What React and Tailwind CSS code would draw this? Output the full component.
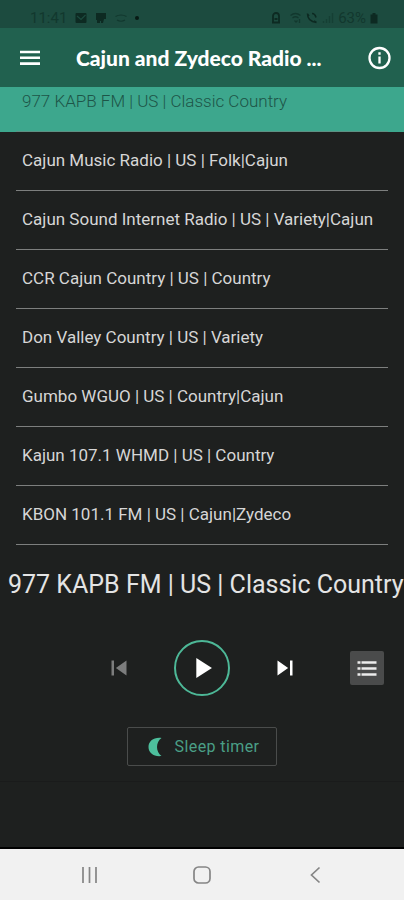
import { useState } from 'react';
import clsx from 'clsx';
import { MdSkipPrevious, MdSkipNext, MdPlayArrow, MdPause } from 'react-icons/md';

const STATIONS = [
  '977 KAPB FM | US | Classic Country',
  'Cajun Music Radio | US | Folk|Cajun',
  'Cajun Sound Internet Radio | US | Variety|Cajun',
  'CCR Cajun Country | US | Country',
  'Don Valley Country | US | Variety',
  'Gumbo WGUO | US | Country|Cajun',
  'Kajun 107.1 WHMD | US | Country',
  'KBON 101.1 FM | US | Cajun|Zydeco',
];

const StatusBar = () => (
  <div className="flex h-7 items-end justify-between bg-[#1c4b3f] pl-[30px] pr-[26px] pb-0.5 text-[#0d2a22]">
    <div className="flex items-center gap-2">
      <span className="text-[15px] leading-4 text-[#12382e]">11:41</span>
      <svg className="h-3 w-3" viewBox="0 0 12 12" fill="none">
        <rect x="0.5" y="1" width="11" height="10" rx="1" fill="currentColor" />
        <path d="M2 4l4 3.5L10.5 3" stroke="#1c4b3f" strokeWidth="1.2" />
      </svg>
      <svg className="h-3 w-3" viewBox="0 0 12 12">
        <path d="M1 1h10v6H9l-1 4H6V9H5v2H2V8H1z" fill="currentColor" />
      </svg>
      <svg className="h-3 w-3" viewBox="0 0 12 12" fill="none" stroke="#12382e" strokeWidth="1.2">
        <path d="M0.5 4.500q5.500-3 11 0M2 8q4 2.500 8 0" />
      </svg>
      <span className="h-1 w-1 rounded-full bg-[#081a15]" />
    </div>
    <div className="flex items-center gap-1">
      <svg className="mr-1 h-3 w-3" viewBox="0 0 12 12" fill="none" stroke="currentColor" strokeWidth="1.8">
        <path d="M3 10.500V4a3 3 0 0 1 6 0v6.500M2 10.500h8M4.500 7h3" />
      </svg>
      <svg className="h-3 w-3" viewBox="0 0 12 12" fill="none" stroke="#12382e" strokeWidth="1.3">
        <path d="M0.500 3.500q5-4 10 0M2.500 6q3-2.500 6 0M4.500 8.500l1.500 1.500 1.500-1.500M9.500 7v4" />
      </svg>
      <svg className="h-3 w-3" viewBox="0 0 12 12" fill="none" stroke="currentColor" strokeWidth="1.6">
        <path d="M1.500 1.500q0 8 9 9M1.500 2l1.500 2M8 9l2.500 1.500M6 1.500q3 0 4 4" />
      </svg>
      <svg className="h-3 w-3" viewBox="0 0 12 12" fill="none" stroke="#153f34" strokeWidth="1.4">
        <path d="M1.500 11V9M4.500 11V7M7.500 11V4M10.500 11V1" />
      </svg>
      <span className="text-[15px] leading-4 text-[#12382e]">63%</span>
      <svg className="h-3 w-2" viewBox="0 0 8 12">
        <path d="M2.500 1h3v1.500H7.500V11.500H0.500V2.500h2z" fill="currentColor" />
      </svg>
    </div>
  </div>
);

const Header = () => (
  <header className="flex h-[59px] items-center bg-[#21614f] px-3 text-white">
    <button aria-label="Menu" className="px-2">
      <svg className="h-5 w-5" viewBox="0 0 20 20" stroke="currentColor" strokeWidth="2.6">
        <path d="M0 4h20M0 9.800h20M0 15.600h20" />
      </svg>
    </button>
    <h1 className="min-w-0 flex-1 truncate pl-7 font-['Lato',sans-serif] text-[21px] leading-7 font-black">
      Cajun and Zydeco Radio ...
    </h1>
    <button aria-label="Info">
      <svg className="h-6 w-6" viewBox="0 0 24 24" fill="none" stroke="currentColor" strokeWidth="2.3">
        <circle cx="11.500" cy="12" r="10" />
        <path d="M11.500 10.500v7M11.500 6.300v2.400" />
      </svg>
    </button>
  </header>
);

const StationList = ({ current, onSelect }) => (
  <ul className="flex h-[458px] flex-col justify-end overflow-hidden">
    {STATIONS.map((station, index) => (
      <li
        key={station}
        className={clsx('h-[59px] shrink-0 px-4', index === current && 'bg-[#3da78d]')}
      >
        <button
          onClick={() => onSelect(index)}
          className={clsx(
            'h-full w-full truncate border-b pl-1.5 text-left text-[17px]',
            index === current
              ? 'border-[#5d9183] font-light text-[#1d5548]'
              : 'border-[#7d7f7e] text-[#d6d6d6]'
          )}
        >
          {station}
        </button>
      </li>
    ))}
  </ul>
);

const NavigationBar = () => (
  <nav className="grid h-[53px] grid-cols-[1fr_auto_1fr] items-center border-t-2 border-black bg-[#f1f1f1] text-[#858585]">
    <button aria-label="Recent apps" className="justify-self-center pr-3">
      <svg className="h-5 w-5" viewBox="0 0 20 20" stroke="currentColor" strokeWidth="1.7">
        <path d="M3 2v16M9.500 2v16M16 2v16" />
      </svg>
    </button>
    <button aria-label="Home">
      <svg className="h-5 w-5" viewBox="0 0 20 20" fill="none" stroke="currentColor" strokeWidth="1.7">
        <rect x="2" y="2" width="16" height="16" rx="4.500" />
      </svg>
    </button>
    <button aria-label="Back" className="justify-self-center pl-4">
      <svg className="h-5 w-5" viewBox="0 0 20 20" fill="none" stroke="currentColor" strokeWidth="1.7">
        <path d="M13.500 2.500L5.500 10l8 7.500" />
      </svg>
    </button>
  </nav>
);

export default function App() {
  const [current, setCurrent] = useState(0);
  const [playing, setPlaying] = useState(false);

  return (
    <div className="flex min-h-screen flex-col bg-[#1e201f] font-['Roboto',sans-serif]">
      <StatusBar />
      <Header />
      <StationList current={current} onSelect={setCurrent} />

      <main className="flex flex-1 flex-col">
        <h2 className="mt-5 pl-2 text-[25px] leading-10 whitespace-nowrap text-[#e4e4e4]">
          {STATIONS[current]}
        </h2>

        {/* Playback controls */}
        <div className="mt-[35px] grid grid-cols-[1fr_auto_1fr] items-center px-5">
          <div className="flex justify-end pr-10">
            <button
              aria-label="Previous station"
              disabled={current === 0}
              onClick={() => setCurrent(current - 1)}
              className="text-white disabled:text-[#7c7d7d]"
            >
              <MdSkipPrevious className="h-[30px] w-[30px]" />
            </button>
          </div>
          <button
            aria-label={playing ? 'Pause' : 'Play'}
            onClick={() => setPlaying(!playing)}
            className="flex h-14 w-14 items-center justify-center rounded-full border-2 border-[#4db897] text-white"
          >
            {playing ? <MdPause className="h-[34px] w-[34px]" /> : <MdPlayArrow className="h-[34px] w-[34px]" />}
          </button>
          <div className="flex items-center justify-between pl-10">
            <button
              aria-label="Next station"
              onClick={() => setCurrent((current + 1) % STATIONS.length)}
              className="text-white"
            >
              <MdSkipNext className="h-[30px] w-[30px]" />
            </button>
            <button
              aria-label="Station list"
              className="flex h-[34px] w-[34px] items-center justify-center rounded-xs bg-[#4a4b4b] text-[#ececec]"
            >
              <svg className="h-5 w-5" viewBox="0 0 20 20" stroke="currentColor" strokeWidth="2.6">
                <path d="M0.500 4.500h3M4.500 4.500h15M0.500 10.500h3M4.500 10.500h15M0.500 16.500h3M4.500 16.500h15" />
              </svg>
            </button>
          </div>
        </div>

        <div className="flex justify-center border-b border-[#1a1b1b] pt-[31px] pb-[15px]">
          <button className="flex h-[39px] items-center gap-2.5 rounded-xs border border-[#4a4c4b] px-[17px] text-base tracking-wide text-[#4a9f86]">
            <svg className="h-5 w-5" viewBox="0 0 20 20">
              <path d="M16.500 1C9 0 3.500 4 3.500 10s5.500 10 13 9C10.500 15 10.500 5 16.500 1z" fill="#4dbf9c" />
            </svg>
            Sleep timer
          </button>
        </div>
      </main>

      <NavigationBar />
    </div>
  );
}
